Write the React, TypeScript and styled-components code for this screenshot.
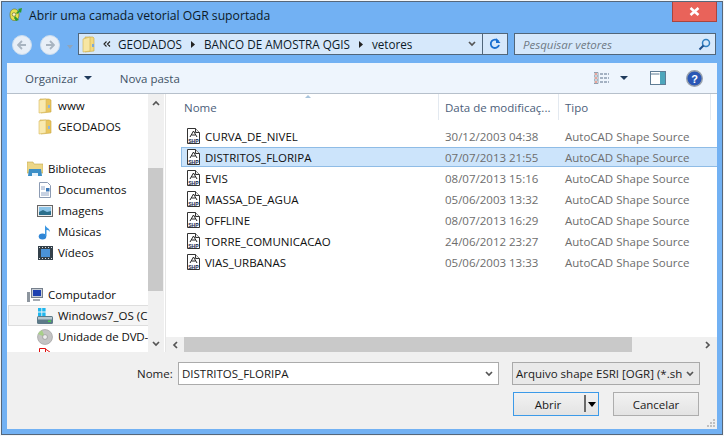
import React from "react"
import styled, { createGlobalStyle } from "styled-components"

const Global = createGlobalStyle`
    html, body { margin: 0; padding: 0; background: #f4f6f8; }
    * { box-sizing: border-box; }
`

const Window = styled.div`
    width: 722px;
    height: 434px;
    margin: 1px;
    display: flex;
    flex-direction: column;
    padding: 0 5px 5px 5px;
    background: #72b1f3;
    border: 1px solid #56677a;
    font-family: "Open Sans", "Noto Sans", sans-serif;
    font-size: 11.5px;
    color: #1a1a1a;
    overflow: hidden;
`

const TitleBar = styled.div`
    height: 31px;
    flex: none;
    display: flex;
    align-items: flex-start;
    gap: 7px;
    padding-left: 2px;
`

const TitleIcon = styled.svg`
    margin-top: 5px;
    flex: none;
`

const TitleText = styled.span`
    margin-top: 4px;
    font-size: 12.2px;
    line-height: 20px;
    color: #0c1a28;
`

const CloseButton = styled.div`
    margin-left: auto;
    width: 45px;
    height: 20px;
    background: #e9635a;
    border: 1px solid #a8453f;
    border-top: none;
    display: flex;
    align-items: center;
    justify-content: center;
`

const NavBar = styled.div`
    height: 30px;
    flex: none;
    display: flex;
    align-items: flex-start;
    padding-left: 5px;
`

const NavCircle = styled.div`
    width: 20px;
    height: 20px;
    margin-top: 2px;
    margin-right: 8px;
    border-radius: 50%;
    background: #e8eff7;
    border: 1px solid #c9dcef;
    display: flex;
    align-items: center;
    justify-content: center;
`

const NavDrop = styled.div`
    width: 0;
    height: 0;
    margin: 12px 4px 0 -1px;
    border-left: 3.5px solid transparent;
    border-right: 3.5px solid transparent;
    border-top: 4px solid #8fa5bb;
`

const AddressBox = styled.div`
    width: 430px;
    height: 22px;
    margin-left: 1px;
    display: flex;
    align-items: center;
    background: #d6e8fb;
    border: 1px solid #51667a;
`

const Crumbs = styled.div`
    flex: 1;
    display: flex;
    align-items: center;
    padding-left: 3px;
    min-width: 0;
`

const CrumbText = styled.span`
    font-size: 11.7px;
    line-height: 20px;
    color: #0c1a28;
    white-space: nowrap;
`

const CrumbSep = styled.span<{ $w: number }>`
    width: ${p => p.$w}px;
    flex: none;
    display: flex;
    align-items: center;
    justify-content: center;
`

const AddressChevron = styled.span`
    display: flex;
    margin-right: 6px;
`

const Refresh = styled.div`
    width: 25px;
    height: 20px;
    flex: none;
    border-left: 1px solid #51667a;
    display: flex;
    align-items: center;
    justify-content: center;
`

const SearchBox = styled.div`
    width: 202px;
    height: 22px;
    margin-left: 6px;
    padding: 0 4px 0 8px;
    display: flex;
    align-items: center;
    justify-content: space-between;
    background: #d6e8fb;
    border: 1px solid #51667a;
    font-style: italic;
    color: #6f7a85;
`

const Toolbar = styled.div`
    height: 31px;
    flex: none;
    display: flex;
    align-items: center;
    padding: 0 14px 0 18px;
    background: #eef5fd;
    border-bottom: 1px solid #b6c0cb;
    color: #3e5266;
`

const ToolLabel = styled.span`
    display: flex;
    align-items: center;
    gap: 6px;
    margin-right: 28px;
`

const Caret = styled.span`
    width: 0;
    height: 0;
    border-left: 4px solid transparent;
    border-right: 4px solid transparent;
    border-top: 4px solid #1f3a5c;
`

const ToolIcons = styled.div`
    margin-left: auto;
    display: flex;
    align-items: center;
    gap: 7px;
`

const ToolCaret = styled(Caret)`
    margin: 0 15px 0 4px;
`

const HelpGap = styled.span`
    width: 6px;
`

const Main = styled.div`
    height: 258px;
    flex: none;
    display: flex;
    background: #fff;
`

const Sidebar = styled.div`
    width: 141px;
    flex: none;
    overflow: hidden;
    padding-top: 1px;
`

const NavRow = styled.div<{ $indent: number; $hover?: boolean; $tight?: boolean }>`
    height: 21px;
    display: flex;
    align-items: center;
    white-space: nowrap;
    overflow: hidden;
    gap: 5px;
    padding-left: ${p => p.$indent}px;
    color: #0e0e0e;
    ${p => p.$tight && "letter-spacing: -0.12px;"}
    ${p => p.$hover && "background: #f5f5f5; border: 1px solid #dedede; border-right: none; margin-left: 1px; padding-left: 28px;"}
`

const NavIcon = styled.span`
    width: 16px;
    height: 16px;
    flex: none;
    display: flex;
    align-items: center;
    justify-content: center;
`

const NavSpacer = styled.div`
    height: 21px;
`

const VScroll = styled.div`
    width: 16px;
    flex: none;
    background: #f0f0f0;
    display: flex;
    flex-direction: column;
    align-items: stretch;
`

const VArrow = styled.div`
    height: 17px;
    flex: none;
    display: flex;
    align-items: center;
    justify-content: center;
`

const VTrack = styled.div`
    flex: 1;
    padding: 57px 1px 44px 0;
    display: flex;
`

const VThumb = styled.div`
    flex: 1;
    background: #c9c9c9;
`

const Splitter = styled.div`
    width: 2px;
    flex: none;
    background: #fff;
    border-right: 1px solid #e6e6e6;
`

const ListPane = styled.div`
    flex: 1;
    min-width: 0;
    display: flex;
    flex-direction: column;
    position: relative;
`

const ListHeader = styled.div`
    height: 26px;
    flex: none;
    display: grid;
    grid-template-columns: 273px 120px 152px;
    color: #4c607a;
`

const HeadCell = styled.div<{ $first?: boolean }>`
    padding: 7px 0 0 ${p => (p.$first ? 18 : 6)}px;
    line-height: 14px;
    border-right: 1px solid #e3e9f0;
    white-space: nowrap;
    overflow: hidden;
`

const SortMark = styled.span`
    position: absolute;
    left: 139px;
    top: 1px;
    width: 0;
    height: 0;
    border-left: 3.5px solid transparent;
    border-right: 3.5px solid transparent;
    border-bottom: 3.5px solid #a8c4dc;
`

const Rows = styled.div`
    flex: 1;
    padding: 6px 0 0 15px;
    overflow: hidden;
`

const FileRow = styled.div<{ $selected?: boolean }>`
    height: 20px;
    width: 540px;
    margin-bottom: 1px;
    display: grid;
    grid-template-columns: 263px 120px 1fr;
    align-items: center;
    background: ${p => (p.$selected ? "#cce4fb" : "transparent")};
    border: 1px solid ${p => (p.$selected ? "#8fbce6" : "transparent")};
    color: #6d6d6d;
`

const NameCell = styled.div`
    display: flex;
    align-items: center;
    gap: 5px;
    padding-left: 5px;
    color: #101010;
`

const HScroll = styled.div`
    height: 15px;
    flex: none;
    display: flex;
    background: #f0f0f0;
`

const HArrow = styled.div`
    width: 18px;
    flex: none;
    display: flex;
    align-items: center;
    justify-content: center;
`

const HThumb = styled.div`
    width: 448px;
    flex: none;
    background: #c9c9c9;
`

const HRest = styled.div`
    flex: 1;
`

const Footer = styled.div`
    flex: 1;
    display: flex;
    flex-direction: column;
    padding: 10px 16px 0 130px;
    background: #f0f0f0;
    position: relative;
`

const NameLine = styled.div`
    display: flex;
    align-items: center;
    height: 23px;
`

const NameLabel = styled.span`
    width: 41px;
    flex: none;
`

const NameInput = styled.div`
    width: 321px;
    height: 23px;
    display: flex;
    align-items: center;
    justify-content: space-between;
    padding: 0 5px 0 3px;
    background: #fff;
    border: 1px solid #ababab;
`

const FilterSelect = styled.div`
    width: 188px;
    height: 23px;
    margin-left: 13px;
    display: flex;
    align-items: center;
    justify-content: space-between;
    padding: 0 5px 0 3px;
    background: #e9e9e9;
    border: 1px solid #a9a9a9;
    white-space: nowrap;
`

const ButtonLine = styled.div`
    display: flex;
    justify-content: flex-end;
    gap: 14px;
    margin-top: 7px;
    margin-right: 2px;
`

const DialogButton = styled.div<{ $primary?: boolean }>`
    width: 86px;
    height: 24px;
    display: flex;
    align-items: center;
    justify-content: center;
    position: relative;
    padding-right: ${p => (p.$primary ? 16 : 0)}px;
    background: linear-gradient(#f2f2f2, #e3e3e3);
    border: 1px solid ${p => (p.$primary ? "#3c9ae8" : "#adadad")};
`

const SplitMark = styled.span`
    position: absolute;
    right: 12px;
    top: 2px;
    bottom: 3px;
    width: 2px;
    background: #6a6a6a;
`

const SplitCaret = styled.span`
    position: absolute;
    right: 2px;
    top: 9px;
    width: 0;
    height: 0;
    border-left: 4px solid transparent;
    border-right: 4px solid transparent;
    border-top: 5px solid #000;
`

const Grip = styled.svg`
    position: absolute;
    right: 1px;
    bottom: 1px;
`

const RedSvg = styled.svg`
    margin-bottom: 4px;
`

const ChevronDown = ({ color = "#555" }: { color?: string }) => (
    <svg width="8" height="6" viewBox="0 0 8 6">
        <path d="M1 1l3 3 3-3" fill="none" stroke={color} strokeWidth="1.7" />
    </svg>
)

const Folder = () => (
    <svg width="14" height="17" viewBox="0 0 14 17">
        <path d="M3 1h8l1 1v13l-9 1z" fill="#f2d97f" stroke="#c9a642" strokeWidth=".6" />
        <path d="M1 3l7-2v14l-7 1z" fill="#f7e6a3" stroke="#cfae4f" strokeWidth=".6" />
        <rect x="10" y="8" width="2" height="3" fill="#7ba8d8" />
    </svg>
)

const SmallFolder = () => (
    <svg width="14" height="16" viewBox="0 0 14 16">
        <path d="M2 1h9l2 1v12l-10 1z" fill="#e9c65f" stroke="#c9a642" strokeWidth=".6" />
        <path d="M1 2l7-1v13l-7 1z" fill="#f9eab0" stroke="#d8bb5e" strokeWidth=".6" />
        <rect x="10" y="7" width="2" height="3" fill="#8fb6dd" />
    </svg>
)

const Shp = () => (
    <svg width="13" height="16" viewBox="0 0 13 16">
        <path d="M.5.5h8l4 4v11H.5z" fill="#fff" stroke="#333" />
        <path d="M8.5.5v4h4" fill="#e8e8e8" stroke="#333" />
        <path d="M6.5 3L3 9M6.5 3L10 9M4.5 7h4" fill="none" stroke="#222" />
        <text x="1.2" y="14.5" fontSize="5.5" fontWeight="700" fontFamily="Liberation Sans, sans-serif" fill="#14224a" textLength="10.5" lengthAdjust="spacingAndGlyphs">SHP</text>
    </svg>
)

const Library = () => (
    <svg width="16" height="16" viewBox="0 0 16 16">
        <path d="M0 1h6l1 2h9v9H0z" fill="#ecd687" stroke="#c4a74f" strokeWidth=".6" />
        <path d="M2 8h12l1 7H1z" fill="#3c8fc7" />
        <path d="M5 15v-3h6v3" fill="#e6f2fa" />
    </svg>
)

const Documents = () => (
    <svg width="14" height="16" viewBox="0 0 14 16">
        <path d="M1.5.5h8l3 3v12h-11z" fill="#fff" stroke="#8c9bb3" />
        <path d="M3 5h4M3 7h4M3 11h8M3 13h8" stroke="#90a4c4" />
        <rect x="8" y="6" width="3.5" height="3.5" fill="#3b78b8" />
    </svg>
)

const Pictures = () => (
    <svg width="16" height="14" viewBox="0 0 16 14">
        <rect x=".5" y="1.5" width="15" height="11" fill="#eee" stroke="#666" />
        <rect x="2" y="3" width="12" height="8" fill="#8cc4e8" />
        <path d="M2 8l4-2 4 2 4-1v4H2z" fill="#2c6f8c" />
    </svg>
)

const Music = () => (
    <svg width="14" height="16" viewBox="0 0 14 16">
        <ellipse cx="4.5" cy="12.5" rx="3.8" ry="3" fill="#2f86d6" />
        <path d="M7 12V1c1 3 5 3 5 7-1-2-3-2-3.5-2V12z" fill="#3c97e2" />
    </svg>
)

const Videos = () => (
    <svg width="15" height="14" viewBox="0 0 15 14">
        <rect width="15" height="14" fill="#33404a" />
        <rect x="3" y="3" width="9" height="8" fill="#4b93d8" />
        <path d="M1 1h1v1H1zM4 1h1v1H4zM7 1h1v1H7zM10 1h1v1h-1zM13 1h1v1h-1zM1 12h1v1H1zM4 12h1v1H4zM7 12h1v1H7zM10 12h1v1h-1zM13 12h1v1h-1z" fill="#ddd" />
    </svg>
)

const Computer = () => (
    <svg width="16" height="16" viewBox="0 0 16 16">
        <rect x="4.5" y="1.5" width="11" height="9" fill="#c8ced6" stroke="#76808c" />
        <rect x="6" y="3" width="8" height="6" fill="#1c3fb0" />
        <path d="M0 5h3v10H0z" fill="#8d959e" />
        <path d="M6 12h7v2H6z" fill="#a5abb3" />
    </svg>
)

const WinDrive = () => (
    <svg width="16" height="16" viewBox="0 0 16 16">
        <path d="M1 0h3.4v3.6H1zM5.2 0h3.4v3.6H5.2zM1 4.4h3.400v3.600H1zM5.200 4.400h3.400v3.600H5.200z" fill="#1fb6ee" />
        <rect x="0" y="8" width="16" height="8" rx="1.500" fill="#5d7a88" />
        <rect x="1" y="9" width="14" height="2.500" fill="#b8c8d0" />
        <rect x="11" y="12.500" width="3" height="1.500" fill="#49d14a" />
    </svg>
)

const Dvd = () => (
    <svg width="16" height="16" viewBox="0 0 16 16">
        <circle cx="8" cy="8" r="7.5" fill="#c3c3c3" stroke="#999" strokeWidth=".6" />
        <path d="M8 8L1 5A7.5 7.5 0 0 1 5 1.2z" fill="#a8d089" />
        <circle cx="8" cy="8" r="2.4" fill="#eee" stroke="#888" strokeWidth=".6" />
    </svg>
)

const RedDrive = () => (
    <RedSvg width="14" height="16" viewBox="0 0 14 16">
        <path d="M1.500.5h6v7h-6zM7.500 1l5 3.500" fill="#fff" stroke="#e01010" />
    </RedSvg>
)

const navItems: { key: string; label?: string; icon?: React.ReactNode; indent?: number; hover?: boolean; tight?: boolean }[] = [
    { key: "www", label: "www", icon: <SmallFolder />, indent: 30 },
    { key: "geo", label: "GEODADOS", icon: <SmallFolder />, indent: 30 },
    { key: "a" },
    { key: "bib", label: "Bibliotecas", icon: <Library />, indent: 20 },
    { key: "doc", label: "Documentos", icon: <Documents />, indent: 30 },
    { key: "img", label: "Imagens", icon: <Pictures />, indent: 30 },
    { key: "mus", label: "Músicas", icon: <Music />, indent: 30 },
    { key: "vid", label: "Vídeos", icon: <Videos />, indent: 30 },
    { key: "b" },
    { key: "comp", label: "Computador", icon: <Computer />, indent: 20 },
    { key: "win", label: "Windows7_OS (C", icon: <WinDrive />, indent: 30, hover: true },
    { key: "dvd", label: "Unidade de DVD-", icon: <Dvd />, indent: 30, tight: true },
    { key: "red", label: "", icon: <RedDrive />, indent: 30 },
]

const files = [
    { name: "CURVA_DE_NIVEL", date: "30/12/2003 04:38" },
    { name: "DISTRITOS_FLORIPA", date: "07/07/2013 21:55", selected: true },
    { name: "EVIS", date: "08/07/2013 15:16" },
    { name: "MASSA_DE_AGUA", date: "05/06/2003 13:32" },
    { name: "OFFLINE", date: "08/07/2013 16:29" },
    { name: "TORRE_COMUNICACAO", date: "24/06/2012 23:27" },
    { name: "VIAS_URBANAS", date: "05/06/2003 13:33" },
]

export default function App() {
    return (
        <>
            <Global />
            <Window>
                <TitleBar>
                    <TitleIcon width="13" height="15" viewBox="0 0 13 15">
                        <path d="M5.500 2C2.500 2 1 4.500 1 8s1.500 5.500 4.500 5.500S10 11 10 8 8.500 2 5.500 2z" fill="#e6e04e" stroke="#6f7a2c" strokeWidth=".7" />
                        <circle cx="5" cy="7.500" r="1.800" fill="#fbf9c4" stroke="#55602a" strokeWidth=".6" />
                        <path d="M6 9l4 4-3 1-2-3zM7 6l3-3-1-1 4-1-1 5-1-1-3 2z" fill="#2f9a30" />
                    </TitleIcon>
                    <TitleText>Abrir uma camada vetorial OGR suportada</TitleText>
                    <CloseButton>
                        <svg width="11" height="9" viewBox="0 0 11 9">
                            <path d="M1.5 1l8 7M9.5 1l-8 7" stroke="#fff" strokeWidth="2.6" />
                        </svg>
                    </CloseButton>
                </TitleBar>
                <NavBar>
                    <NavCircle>
                        <svg width="10" height="10" viewBox="0 0 10 10">
                            <path d="M5 1L1 5l4 4M1 5h8" fill="none" stroke="#a8b4c0" strokeWidth="1.8" />
                        </svg>
                    </NavCircle>
                    <NavCircle>
                        <svg width="10" height="10" viewBox="0 0 10 10">
                            <path d="M5 1l4 4-4 4M9 5H1" fill="none" stroke="#a8b4c0" strokeWidth="1.8" />
                        </svg>
                    </NavCircle>
                    <NavDrop />
                    <AddressBox>
                        <Crumbs>
                            <Folder />
                            <CrumbSep $w={22}>
                                <svg width="8" height="6" viewBox="0 0 8 6">
                                    <path d="M3.5.5L1 3l2.5 2.5M7 .5L4.500 3 7 5.500" fill="none" stroke="#222" strokeWidth="1.100" />
                                </svg>
                            </CrumbSep>
                            <CrumbText>GEODADOS</CrumbText>
                            <CrumbSep $w={22}>
                                <svg width="4" height="7" viewBox="0 0 4 7"><path d="M0 0l4 3.500L0 7z" fill="#222" /></svg>
                            </CrumbSep>
                            <CrumbText>BANCO DE AMOSTRA QGIS</CrumbText>
                            <CrumbSep $w={22}>
                                <svg width="4" height="7" viewBox="0 0 4 7"><path d="M0 0l4 3.500L0 7z" fill="#222" /></svg>
                            </CrumbSep>
                            <CrumbText>vetores</CrumbText>
                        </Crumbs>
                        <AddressChevron><ChevronDown /></AddressChevron>
                        <Refresh>
                            <svg width="12" height="12" viewBox="0 0 12 12">
                                <path d="M9.500 3.500A4.200 4.200 0 1 0 10 7" fill="none" stroke="#1a6fd0" strokeWidth="1.800" />
                                <path d="M7 0v5h4.500z" fill="#1a6fd0" />
                            </svg>
                        </Refresh>
                    </AddressBox>
                    <SearchBox>
                        Pesquisar vetores
                        <svg width="13" height="13" viewBox="0 0 13 13">
                            <circle cx="8" cy="5" r="3.500" fill="none" stroke="#2f7fc0" strokeWidth="1.500" />
                            <path d="M5.500 7.500L1.500 11.500" stroke="#1d4f8c" strokeWidth="2" />
                        </svg>
                    </SearchBox>
                </NavBar>
                <Toolbar>
                    <ToolLabel>Organizar <Caret /></ToolLabel>
                    <ToolLabel>Nova pasta</ToolLabel>
                    <ToolIcons>
                        <svg width="15" height="12" viewBox="0 0 15 12">
                            <path d="M0 .5h4v11H0zM0 4h4M0 8h4" fill="#fff" stroke="#7a8a9c" strokeWidth=".8" />
                            <path d="M1 2h2M1 6h2M1 10h2" stroke="#d04a3a" />
                            <path d="M6 2h9M6 6h9M6 10h9" stroke="#5a6f88" strokeDasharray="3 1" />
                        </svg>
                        <ToolCaret />
                        <svg width="16" height="14" viewBox="0 0 16 14">
                            <rect x=".5" y=".5" width="15" height="13" fill="#fff" stroke="#5f7c94" />
                            <rect x="10" y="1" width="5" height="12" fill="#4da6bc" />
                            <path d="M.5 3h9" stroke="#5f7c94" />
                        </svg>
                        <HelpGap />
                        <svg width="17" height="17" viewBox="0 0 17 17">
                            <circle cx="8.500" cy="8.500" r="7.800" fill="#2a57b5" stroke="#9aa2ac" strokeWidth="1.400" />
                            <text x="8.500" y="12.500" textAnchor="middle" fontSize="11" fontWeight="700" fontFamily="Liberation Sans, sans-serif" fill="#fff">?</text>
                        </svg>
                    </ToolIcons>
                </Toolbar>
                <Main>
                    <Sidebar>
                        {navItems.map(item =>
                            item.label === undefined ? (
                                <NavSpacer key={item.key} />
                            ) : (
                                <NavRow key={item.key} $indent={item.indent ?? 0} $hover={item.hover} $tight={item.tight}>
                                    <NavIcon>{item.icon}</NavIcon>
                                    {item.label}
                                </NavRow>
                            )
                        )}
                    </Sidebar>
                    <VScroll>
                        <VArrow>
                            <svg width="8" height="6" viewBox="0 0 8 6"><path d="M1 5l3-3 3 3" fill="none" stroke="#555" strokeWidth="1.700" /></svg>
                        </VArrow>
                        <VTrack><VThumb /></VTrack>
                        <VArrow><ChevronDown /></VArrow>
                    </VScroll>
                    <Splitter />
                    <ListPane>
                        <SortMark />
                        <ListHeader>
                            <HeadCell $first>Nome</HeadCell>
                            <HeadCell>Data de modificaç...</HeadCell>
                            <HeadCell>Tipo</HeadCell>
                        </ListHeader>
                        <Rows>
                            {files.map(file => (
                                <FileRow key={file.name} $selected={file.selected}>
                                    <NameCell><Shp />{file.name}</NameCell>
                                    <span>{file.date}</span>
                                    <span>AutoCAD Shape Source</span>
                                </FileRow>
                            ))}
                        </Rows>
                        <HScroll>
                            <HArrow>
                                <svg width="6" height="8" viewBox="0 0 6 8"><path d="M5 1L2 4l3 3" fill="none" stroke="#555" strokeWidth="1.700" /></svg>
                            </HArrow>
                            <HThumb />
                            <HRest />
                            <HArrow>
                                <svg width="6" height="8" viewBox="0 0 6 8"><path d="M1 1l3 3-3 3" fill="none" stroke="#555" strokeWidth="1.700" /></svg>
                            </HArrow>
                        </HScroll>
                    </ListPane>
                </Main>
                <Footer>
                    <NameLine>
                        <NameLabel>Nome:</NameLabel>
                        <NameInput>DISTRITOS_FLORIPA <ChevronDown /></NameInput>
                        <FilterSelect>Arquivo shape ESRI [OGR] (*.sh <ChevronDown /></FilterSelect>
                    </NameLine>
                    <ButtonLine>
                        <DialogButton $primary>
                            Abrir
                            <SplitMark />
                            <SplitCaret />
                        </DialogButton>
                        <DialogButton>Cancelar</DialogButton>
                    </ButtonLine>
                    <Grip width="9" height="9" viewBox="0 0 9 9">
                        <path d="M6 0h2v2H6zM3 3h2v2H3zM6 3h2v2H6zM0 6h2v2H0zM3 6h2v2H3zM6 6h2v2H6z" fill="#c0c0c0" />
                    </Grip>
                </Footer>
            </Window>
        </>
    )
}
